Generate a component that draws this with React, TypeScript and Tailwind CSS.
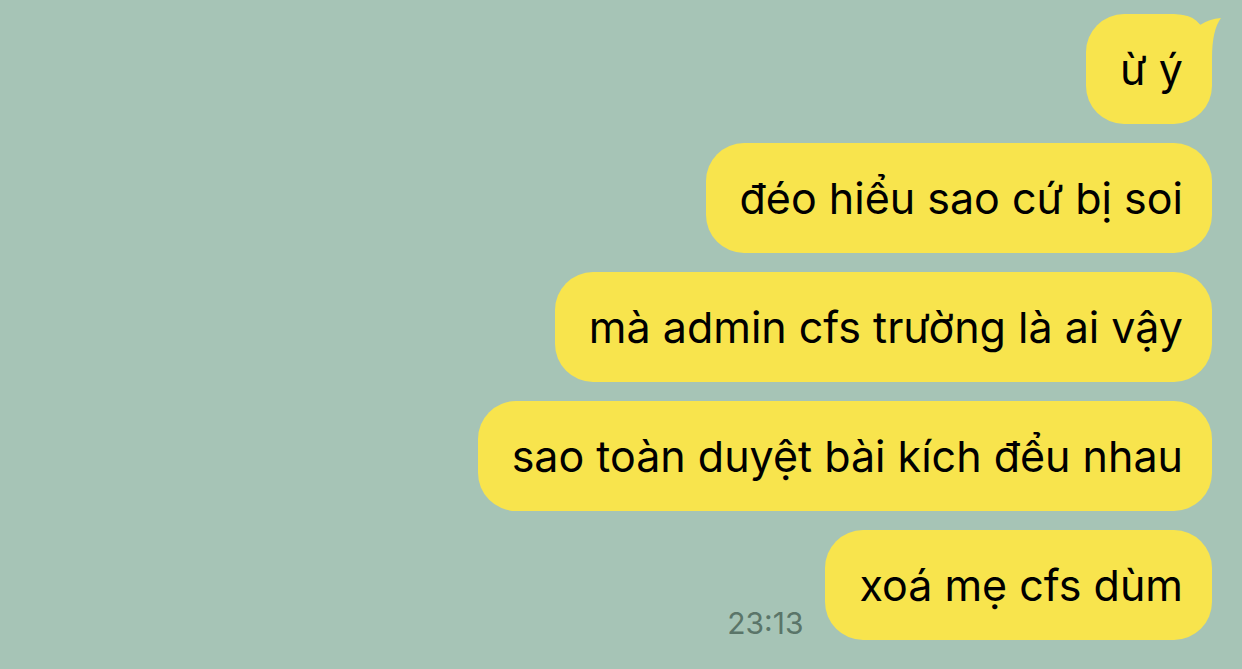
const messages = [
  'ừ ý',
  'đéo hiểu sao cứ bị soi',
  'mà admin cfs trường là ai vậy',
  'sao toàn duyệt bài kích đểu nhau',
  'xoá mẹ cfs dùm',
];

function Bubble({ text, tail }: { text: string; tail?: boolean }) {
  return (
    <div className="relative">
      <div className="h-[110px] flex items-center pl-[34px] pr-[29px] rounded-[38px] bg-[#f8e44d] text-black text-[43px] leading-none">
        {text}
      </div>
      {tail && (
        <svg
          className="absolute right-[-12px] top-0"
          width="42"
          height="44"
          viewBox="0 0 42 44"
        >
          <path d="M0 1 Q 12 2, 18 11 Q 27 5, 39 4 Q 30 16, 30 44 L 0 44 Z" fill="#f8e44d" />
        </svg>
      )}
    </div>
  );
}

export default function App() {
  return (
    <div
      className="w-[1242px] h-[669px] bg-[#a6c4b6] overflow-hidden flex flex-col items-end gap-[19px] pt-[14px] pr-[30px]"
      style={{ fontFamily: 'Inter, "Noto Sans", sans-serif' }}
    >
      {messages.map((m, i) =>
        i === messages.length - 1 ? (
          <div key={i} className="flex items-end gap-[22px]">
            <span className="text-[30px] leading-none text-[#5a7569] mb-[2px]">23:13</span>
            <Bubble text={m} />
          </div>
        ) : (
          <Bubble key={i} text={m} tail={i === 0} />
        )
      )}
    </div>
  );
}
